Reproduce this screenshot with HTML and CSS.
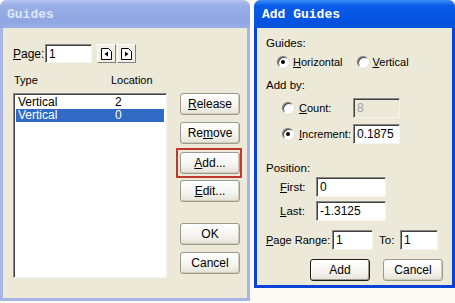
FILE: index.html
```html
<html>
<head>
	<link rel="stylesheet" href="styles.css">
</head>
<body>
	<div class="win inactive guides">
		<div class="title">Guides</div>
		<div class="body left-body">
			<div class="page-row">
				<span class="page-lbl"><u>P</u>age:</span>
				<div class="field page-field">1</div>
				<div class="navs">
					<div class="nav"><svg width="11" height="12" viewBox="0 0 11 12"><path d="M0.5 0.5H7.5L10.5 3.5V11.5H0.5Z" fill="#fff" stroke="#000"/><path d="M7 3.5L3.5 6L7 8.5Z" fill="#000"/></svg></div>
					<div class="nav"><svg width="11" height="12" viewBox="0 0 11 12"><path d="M0.5 0.5H7.5L10.5 3.5V11.5H0.5Z" fill="#fff" stroke="#000"/><path d="M4 3.5L7.5 6L4 8.5Z" fill="#000"/></svg></div>
				</div>
			</div>
			<div class="head-row">
				<span class="col-type">Type</span>
				<span>Location</span>
			</div>
			<div class="main-row">
				<div class="listbox">
					<div class="item"><span class="col-type">Vertical</span><span>2</span></div>
					<div class="item sel"><span class="col-type">Vertical</span><span>0</span></div>
				</div>
				<div class="btn-col">
					<div class="btn"><u>R</u>elease</div>
					<div class="btn b-remove">Re<u>m</u>ove</div>
					<div class="mark"><div class="btn"><u>A</u>dd...</div></div>
					<div class="btn b-edit"><u>E</u>dit...</div>
					<div class="btn b-ok">OK</div>
					<div class="btn b-cancel">Cancel</div>
				</div>
			</div>
		</div>
	</div>

	<div class="win active add-guides">
		<div class="title">Add Guides</div>
		<div class="body right-body">
			<div class="row r1">Guides:</div>
			<div class="row r2">
				<span class="radio on"></span><span class="rtext"><u>H</u>orizontal</span>
				<span class="radio r-vert"></span><span class="rtext"><u>V</u>ertical</span>
			</div>
			<div class="row r3">Add by:</div>
			<div class="row r4 addby">
				<span class="radio"></span><span class="rtext lbl-by"><u>C</u>ount:</span>
				<div class="field disabled w47">8</div>
			</div>
			<div class="row r5 addby">
				<span class="radio on"></span><span class="rtext lbl-by"><u>I</u>ncrement:</span>
				<div class="field w47">0.1875</div>
			</div>
			<div class="row r6">Position:</div>
			<div class="row r7 pos">
				<span class="lbl-pos"><u>F</u>irst:</span>
				<div class="field w70">0</div>
			</div>
			<div class="row r8 pos">
				<span class="lbl-pos"><u>L</u>ast:</span>
				<div class="field w70">-1.3125</div>
			</div>
			<div class="row r9">
				<span class="lbl-range"><u>P</u>age Range:</span>
				<div class="field w41">1</div>
				<span class="lbl-to">To:</span>
				<div class="field w38">1</div>
			</div>
			<div class="row r10">
				<div class="btn default">Add</div>
				<div class="btn b-cancel2">Cancel</div>
			</div>
		</div>
	</div>
</body>
</html>
```

FILE: styles.css
```css
body {
	margin: 0;
	width: 455px;
	height: 303px;
	background-color: #FBFAF4;
	font-family: "Liberation Sans", Arial, sans-serif;
	font-size: 11px;
	color: #000;
	position: relative;
	overflow: hidden;
	white-space: nowrap;
}

u {
	text-decoration: underline;
	text-underline-offset: 1px;
}

/* windows */
.win {
	position: absolute;
	top: 0;
	box-sizing: border-box;
	border: 3px solid;
	border-top: 0;
	border-radius: 7px 7px 0 0;
	display: flex;
	flex-direction: column;
}

.guides {
	left: 0;
	width: 250px;
	height: 301px;
}

.add-guides {
	left: 254px;
	width: 201px;
	height: 288px;
}

.inactive {
	border-color: #A6B5E6;
}

.active {
	border-color: #0842D6;
}

.title {
	height: 28px;
	line-height: 30px;
	font-family: "Liberation Mono", monospace;
	font-weight: bold;
	font-size: 13px;
	margin: 0 -3px;
	border-radius: 7px 7px 0 0;
}

.inactive .title {
	background: linear-gradient(#B4C5F1, #98AEE6 20%, #8EA6E2 80%, #9AAFE6);
	color: #DCE6F9;
	padding-left: 7px;
}

.active .title {
	background: linear-gradient(#3D8DF7, #0A5CE8 20%, #0552E0 80%, #0A55DA);
	color: #fff;
	padding-left: 8px;
}

.body {
	flex: 1;
	background-color: #ECE9D8;
}

/* left dialog */
.left-body {
	padding-left: 10px;
}

.page-row {
	display: flex;
	align-items: center;
	margin-top: 16px;
	height: 19px;
}

.page-lbl {
	width: 32px;
	font-size: 12px;
}

.field {
	box-sizing: border-box;
	background: #fff;
	border: 1px solid;
	border-color: #8A8A8A #F4F4F0 #F4F4F0 #8A8A8A;
	box-shadow: inset 1px 1px #404040;
	padding: 0 3px;
	display: flex;
	align-items: center;
	height: 20px;
	font-size: 12px;
}

.page-field {
	width: 47px;
	height: 19px;
}

.navs {
	display: flex;
	gap: 1px;
	margin-left: 5px;
}

.nav {
	width: 19px;
	height: 19px;
	box-sizing: border-box;
	border: 1px solid;
	border-color: #FFFFFF #808080 #808080 #FFFFFF;
	background: #F1EFE6;
	display: flex;
	align-items: center;
	justify-content: center;
}

.head-row {
	display: flex;
	margin-top: 10px;
	height: 14px;
	line-height: 14px;
	padding-left: 1px;
}

.col-type {
	width: 97px;
}

.main-row {
	display: flex;
	margin-top: 6px;
}

.listbox {
	box-sizing: border-box;
	width: 154px;
	height: 185px;
	background: #fff;
	border: 1px solid;
	border-color: #8A8A8A #F4F4F0 #F4F4F0 #8A8A8A;
	box-shadow: inset 1px 1px #404040;
	padding: 2px 2px 0 2px;
}

.item {
	display: flex;
	height: 13px;
	line-height: 13px;
	padding-left: 2px;
	font-size: 12px;
}

.item.sel {
	background: #316AC5;
	color: #fff;
}

.btn-col {
	display: flex;
	flex-direction: column;
	margin-left: 13px;
	width: 60px;
}

.btn {
	box-sizing: border-box;
	width: 60px;
	height: 22px;
	border: 1px solid #9A9A8E;
	border-radius: 3px;
	background: linear-gradient(#FFFFFF, #F4F3EE 60%, #E5E2D6);
	box-shadow: inset -1px -1px #D0CCBC;
	display: flex;
	align-items: center;
	justify-content: center;
	font-size: 12px;
}

.b-remove {
	margin-top: 7px;
}

.mark {
	box-sizing: border-box;
	width: 66px;
	height: 30px;
	margin: 4px 0 0 -4px;
	border: 2px solid #C0372E;
	padding: 2px 2px;
}

.b-edit {
	margin-top: 2px;
}

.b-ok {
	margin-top: 21px;
}

.b-cancel {
	margin-top: 7px;
}

/* right dialog */
.right-body {
	padding-left: 9px;
}

.row {
	display: flex;
	align-items: center;
}

.r1 { margin-top: 8px; height: 14px; }
.r2 { margin-top: 4px; height: 16px; padding-left: 11px; }
.r3 { margin-top: 8px; height: 14px; }
.r4 { margin-top: 5px; height: 21px; }
.r5 { margin-top: 5px; height: 21px; }
.r6 { margin-top: 17px; height: 14px; }
.r7 { margin-top: 2px; height: 20px; }
.r8 { margin-top: 4px; height: 20px; }
.r9 { margin-top: 9px; height: 19px; }
.r10 { margin-top: 9px; height: 23px; padding-left: 44px; }

.radio {
	box-sizing: border-box;
	width: 12px;
	height: 12px;
	border-radius: 50%;
	border: 1px solid;
	border-color: #808080 #FFFFFF #FFFFFF #808080;
	background: #fff;
	box-shadow: inset 1px 1px #404040, 0 0 0 0.5px #D4D0C8;
	display: flex;
	align-items: center;
	justify-content: center;
}

.radio.on::after {
	content: "";
	width: 4px;
	height: 4px;
	border-radius: 50%;
	background: #000;
}

.rtext {
	margin-left: 4px;
	font-size: 11px;
}

.r-vert {
	margin-left: 14px;
}

.addby {
	padding-left: 16px;
}

.lbl-by {
	margin-left: 5px;
	width: 54px;
}

.w47 { width: 47px; }
.w70 { width: 70px; }
.w41 { width: 41px; }
.w38 { width: 38px; }

.disabled {
	background: #ECE9D8;
	color: #A0A0A0;
}

.pos {
	padding-left: 14px;
}

.lbl-pos {
	width: 36px;
	font-size: 11.5px;
}

.r1, .r3, .r6 {
	font-size: 11.5px;
}

.lbl-range {
	width: 66px;
	font-size: 11px;
}

.lbl-to {
	margin-left: 6px;
	width: 21px;
	font-size: 11.5px;
}

.default {
	border: 1px solid #1E1E1E;
	box-shadow: inset -1px -1px #9A9A8E, inset 1px 1px #fff;
}

.b-cancel2 {
	margin-left: 13px;
}
```
